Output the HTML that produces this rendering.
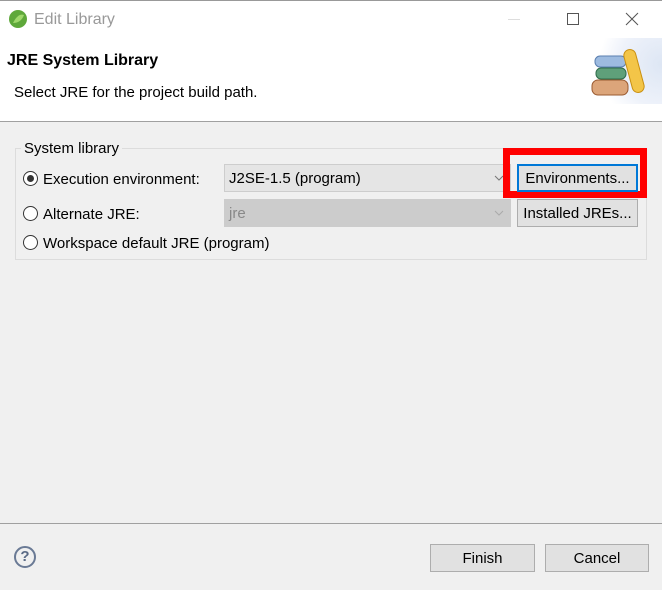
<!DOCTYPE html>
<html><head><meta charset="utf-8"><style>
*{margin:0;padding:0;box-sizing:border-box}
body{width:662px;height:590px;background:#f0f0f0;font-family:"Liberation Sans",sans-serif;font-size:15px;color:#000;position:relative;overflow:hidden}
.a{position:absolute}
.btn{position:absolute;background:#e1e1e1;border:1px solid #adadad;text-align:center;line-height:27px;font-size:15px}
.combo{position:absolute;background:#e5e5e5;border:1px solid #cdcdcd;line-height:28px;padding-left:4px}
.radio{position:absolute;width:15px;height:15px;border:1px solid #333;border-radius:50%;background:#fff}
.chev{position:absolute;right:6px;top:10px}
</style></head><body>
<div class="a" style="left:0;top:0;width:662px;height:122px;background:#fff"></div>
<div class="a" style="left:0;top:0;width:662px;height:1px;background:#999"></div>
<svg class="a" style="left:8px;top:9px" width="20" height="20"><circle cx="10" cy="10" r="9" fill="#5ea83a"/><path d="M5 14 Q10 4 16 6 Q13 14 5 14" fill="#9fd86b"/></svg>
<div class="a" style="left:34px;top:11px;color:#999;font-size:16px">Edit Library</div>
<div class="a" style="left:508px;top:19px;width:12px;height:1px;background:#ddd"></div>
<div class="a" style="left:567px;top:13px;width:12px;height:12px;border:1px solid #555"></div>
<svg class="a" style="left:625px;top:12px" width="14" height="14"><path d="M1 1L13 13M13 1L1 13" stroke="#555" stroke-width="1"/></svg>
<div class="a" style="left:7px;top:52px;font-weight:bold;font-size:16px">JRE System Library</div>
<div class="a" style="left:14px;top:84px">Select JRE for the project build path.</div>
<div class="a" style="left:588px;top:38px;width:74px;height:66px;background:radial-gradient(circle at 100% 40%,#dde6f4 0,#eef2fa 50%,#fff 75%)"></div>
<svg class="a" style="left:590px;top:45px" width="60" height="56">
<rect x="5" y="11" width="31" height="11" rx="5" fill="#9dbbe0" stroke="#5a7fb0"/>
<rect x="6" y="23" width="30" height="11" rx="5" fill="#5fa07a" stroke="#2f6b4a"/>
<rect x="2" y="35" width="36" height="15" rx="6" fill="#dca57a" stroke="#9a5a30"/>
<rect x="38" y="4" width="12" height="44" rx="6" transform="rotate(-15 44 26)" fill="#f3c548" stroke="#c98f10"/>
</svg>
<div class="a" style="left:0;top:121px;width:662px;height:1px;background:#a0a0a0"></div>
<div class="a" style="left:15px;top:148px;width:632px;height:112px;border:1px solid #dcdcdc"></div>
<div class="a" style="left:21px;top:140px;background:#f0f0f0;padding:0 3px">System library</div>
<div class="radio" style="left:23px;top:171px"></div><div class="a" style="left:27px;top:175px;width:7px;height:7px;border-radius:50%;background:#333"></div>
<div class="a" style="left:43px;top:171px">Execution environment:</div>
<div class="radio" style="left:23px;top:206px"></div>
<div class="a" style="left:43px;top:206px">Alternate JRE:</div>
<div class="radio" style="left:23px;top:235px"></div>
<div class="a" style="left:43px;top:235px">Workspace default JRE (program)</div>
<div class="combo" style="left:224px;top:164px;width:287px;height:28px">J2SE-1.5 (program)<svg class="chev" width="10" height="6"><path d="M1 1L5 5L9 1" fill="none" stroke="#777"/></svg></div>
<div class="combo" style="left:224px;top:199px;width:287px;height:28px;background:#ccc;color:#888;border-color:#ccc">jre<svg class="chev" width="10" height="6"><path d="M1 1L5 5L9 1" fill="none" stroke="#aaa"/></svg></div>
<div class="a" style="left:503px;top:148px;width:144px;height:50px;border:7px solid #ff0000"></div>
<div class="btn" style="left:517px;top:164px;width:121px;height:28px;border:2px solid #0078d7;line-height:25px">Environments...</div>
<div class="btn" style="left:517px;top:199px;width:121px;height:28px">Installed JREs...</div>
<div class="a" style="left:0;top:523px;width:662px;height:1px;background:#a0a0a0"></div>
<div class="a" style="left:14px;top:546px;width:22px;height:22px;border:2px solid #6a7a95;border-radius:50%;color:#5a6a85;font-size:15px;font-weight:bold;text-align:center;line-height:18px">?</div>
<div class="btn" style="left:430px;top:544px;width:105px;height:28px">Finish</div>
<div class="btn" style="left:545px;top:544px;width:104px;height:28px">Cancel</div>
</body></html>
